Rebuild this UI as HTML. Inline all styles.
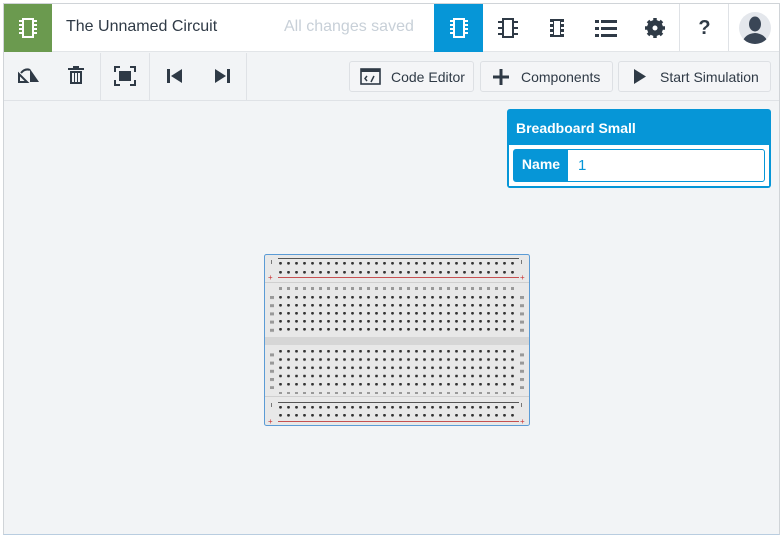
<!DOCTYPE html>
<html><head><style>
*{margin:0;padding:0;box-sizing:border-box}
body{width:783px;height:537px;background:#fff;font-family:"Liberation Sans",sans-serif;position:relative;overflow:hidden}
.frame{position:absolute;left:3px;top:3px;width:777px;height:532px;background:#f2f4f6;border-left:1px solid #d0d4d8;border-top:1px solid #d0d4d8;border-right:1px solid #d0d4d8;border-bottom:1px solid #b9cde0}
.hdr{position:absolute;left:4px;top:4px;width:775px;height:48px;background:#fff;border-bottom:1px solid #e2e5e8}
.green{position:absolute;left:0;top:0;width:48px;height:48px;background:#6b9a4f}
.title{position:absolute;left:62px;top:14px;font-size:16px;color:#2f3a46}
.saved{position:absolute;left:280px;top:14px;font-size:16px;color:#c8d0d8}
.tab{position:absolute;top:0;width:49px;height:48px;display:flex;align-items:center;justify-content:center}
.tb{position:absolute;left:4px;top:53px;width:775px;height:48px;border-bottom:1px solid #dfe2e6}
.sep{position:absolute;top:0;width:1px;height:47px;background:#dfe2e6}
.btn{position:absolute;top:8px;height:31px;border:1px solid #dde0e4;border-radius:3px;background:#f4f5f7;font-size:14px;color:#2f3a46;display:flex;align-items:center}
.panel{position:absolute;left:507px;top:109px;width:264px;height:79px;background:#0696d7;border-radius:3px}
.panel .h{position:absolute;left:9px;top:11px;color:#fff;font-weight:bold;font-size:14px}
.panel .in{position:absolute;left:2px;top:36px;width:260px;height:41px;background:#fff}
.name{position:absolute;left:4px;top:4px;width:252px;height:33px;border:1px solid #0696d7;border-radius:3px;background:#fff}
.name .l{position:absolute;left:0;top:0;width:54px;height:31px;background:#0696d7;color:#fff;font-weight:bold;font-size:14px;line-height:29px;text-align:center}
.name .v{position:absolute;left:64px;top:7px;color:#0696d7;font-size:15px}
</style></head><body>
<div class="frame"></div>
<div class="hdr">
 <div class="green"><svg width="48" height="48"><rect x="19" y="15" width="10" height="18" fill="none" stroke="#fff" stroke-width="2"/><g fill="#fff"><rect x="15" y="16" width="3" height="2"/><rect x="15" y="20" width="3" height="2"/><rect x="15" y="24" width="3" height="2"/><rect x="15" y="28" width="3" height="2"/><rect x="30" y="16" width="3" height="2"/><rect x="30" y="20" width="3" height="2"/><rect x="30" y="24" width="3" height="2"/><rect x="30" y="28" width="3" height="2"/></g></svg></div>
 <div class="title">The Unnamed Circuit</div>
 <div class="saved">All changes saved</div>
 <div class="tab" style="left:430px;background:#0696d7"><svg width="24" height="24"><rect x="7" y="3" width="10" height="18" fill="none" stroke="#fff" stroke-width="2"/><g fill="#fff"><rect x="3" y="4" width="3" height="2"/><rect x="3" y="8" width="3" height="2"/><rect x="3" y="12" width="3" height="2"/><rect x="3" y="16" width="3" height="2"/><rect x="18" y="4" width="3" height="2"/><rect x="18" y="8" width="3" height="2"/><rect x="18" y="12" width="3" height="2"/><rect x="18" y="16" width="3" height="2"/></g></svg></div>
 <div class="tab" style="left:479px"><svg width="24" height="24"><rect x="7" y="3" width="10" height="18" fill="none" stroke="#2f3a46" stroke-width="2"/><g fill="#2f3a46"><rect x="2" y="5" width="5" height="2"/><rect x="2" y="11" width="5" height="2"/><rect x="2" y="17" width="5" height="2"/><rect x="17" y="5" width="5" height="2"/><rect x="17" y="11" width="5" height="2"/><rect x="17" y="17" width="5" height="2"/></g></svg></div>
 <div class="tab" style="left:528px"><svg width="24" height="24"><rect x="5" y="3" width="14" height="18" fill="#2f3a46"/><g fill="#fff"><rect x="5" y="6" width="3" height="2"/><rect x="5" y="11" width="3" height="2"/><rect x="5" y="16" width="3" height="2"/><rect x="16" y="6" width="3" height="2"/><rect x="16" y="11" width="3" height="2"/><rect x="16" y="16" width="3" height="2"/><rect x="9" y="5" width="6" height="14"/></g></svg></div>
 <div class="tab" style="left:577px"><svg width="24" height="24" fill="#2f3a46"><rect x="1" y="4" width="4" height="3"/><rect x="7" y="4" width="16" height="3"/><rect x="1" y="11" width="4" height="3"/><rect x="7" y="11" width="16" height="3"/><rect x="1" y="18" width="4" height="3"/><rect x="7" y="18" width="16" height="3"/></svg></div>
 <div class="tab" style="left:626px"><svg width="24" height="24"><circle cx="12" cy="12" r="6.5" fill="none" stroke="#2f3a46" stroke-width="3"/><g stroke="#2f3a46" stroke-width="3.5"><line x1="12" y1="2" x2="12" y2="22"/><line x1="2" y1="12" x2="22" y2="12"/><line x1="5" y1="5" x2="19" y2="19"/><line x1="19" y1="5" x2="5" y2="19"/></g><circle cx="12" cy="12" r="5" fill="#2f3a46"/><circle cx="12" cy="12" r="2.5" fill="#fff"/></svg></div>
 <div class="sep" style="left:675px"></div>
 <div class="tab" style="left:676px;font-weight:bold;font-size:20px;color:#2f3a46">?</div>
 <div class="sep" style="left:724px"></div>
 <div class="tab" style="left:726px"><svg width="34" height="34"><circle cx="17" cy="17" r="16" fill="#e4e7ec"/><clipPath id="c"><circle cx="17" cy="17" r="16"/></clipPath><g clip-path="url(#c)" fill="#3a4656"><ellipse cx="17" cy="13" rx="6" ry="7.5"/><path d="M4 34 Q5 23 17 22 Q29 23 30 34Z"/></g></svg></div>
</div>
<div class="tb">
 <svg style="position:absolute;left:12px;top:12px" width="26" height="22"><path d="M3 17 L11 17 L3 9 Z" fill="none" stroke="#2f3a46" stroke-width="2"/><path d="M14 4 L23 17 L14 17Z" fill="#2f3a46"/><path d="M5 8 Q9 3 14 5" fill="none" stroke="#2f3a46" stroke-width="2"/></svg>
 <svg style="position:absolute;left:63px;top:12px" width="18" height="22" fill="#2f3a46"><rect x="1" y="3" width="16" height="2"/><rect x="6" y="1" width="6" height="2"/><path d="M3 6 h12 v13 h-12z M5 8 v9 h2 v-9z M8 8 v9 h2 v-9z M11 8 v9 h2 v-9z" fill-rule="evenodd"/></svg>
 <div class="sep" style="left:96px"></div>
 <svg style="position:absolute;left:110px;top:13px" width="22" height="20" fill="none" stroke="#2f3a46" stroke-width="2"><path d="M1 6V1H6M16 1H21V6M21 14V19H16M6 19H1V14"/><rect x="5" y="5" width="12" height="10" fill="#2f3a46" stroke="none"/></svg>
 <div class="sep" style="left:145px"></div>
 <svg style="position:absolute;left:162px;top:15px" width="18" height="16" fill="#2f3a46"><rect x="1" y="1" width="3" height="14"/><path d="M16 1V15L5 8Z"/></svg>
 <svg style="position:absolute;left:210px;top:15px" width="18" height="16" fill="#2f3a46"><rect x="13" y="1" width="3" height="14"/><path d="M1 1V15L12 8Z"/></svg>
 <div class="sep" style="left:242px"></div>
 <div class="btn" style="left:345px;width:125px"><svg style="margin:0 10px 0 10px" width="21" height="17"><rect x="1" y="1" width="19" height="15" fill="none" stroke="#2f3a46" stroke-width="1.6"/><rect x="1" y="1" width="19" height="3" fill="#2f3a46"/><path d="M7 8 L5 10.5 L7 13 M14 8 L11 14" fill="none" stroke="#2f3a46" stroke-width="1.5"/></svg>Code Editor</div>
 <div class="btn" style="left:476px;width:133px"><svg style="margin:0 12px 0 12px" width="16" height="16" fill="#2f3a46"><rect x="6.5" y="0" width="3" height="16"/><rect x="0" y="6.5" width="16" height="3"/></svg>Components</div>
 <div class="btn" style="left:614px;width:153px"><svg style="margin:0 14px 0 15px" width="12" height="15" fill="#2f3a46"><path d="M0 0V15L12 7.5Z"/></svg>Start Simulation</div>
</div>
<div class="panel"><div class="h">Breadboard Small</div><div class="in"><div class="name"><div class="l">Name</div><div class="v">1</div></div></div></div>
<svg style="position:absolute;left:264px;top:254px" width="266" height="172">
<defs>
<pattern id="a" x="15" y="8" width="8" height="9" patternUnits="userSpaceOnUse"><circle cx="1.5" cy="1.2" r="1.4" fill="#333"/></pattern>
<pattern id="b" x="15" y="42" width="8" height="8" patternUnits="userSpaceOnUse"><circle cx="1.5" cy="1.2" r="1.4" fill="#333"/></pattern>
<pattern id="c2" x="15" y="96" width="8" height="8.25" patternUnits="userSpaceOnUse"><circle cx="1.5" cy="1.2" r="1.4" fill="#333"/></pattern>
<pattern id="e" x="15" y="152" width="8" height="8" patternUnits="userSpaceOnUse"><circle cx="1.5" cy="1.2" r="1.4" fill="#333"/></pattern>
<pattern id="n" x="15" y="33" width="8" height="5" patternUnits="userSpaceOnUse"><rect x="0" y="0" width="3" height="3" fill="#999"/></pattern>
<pattern id="s" x="0" y="42" width="4" height="8.2" patternUnits="userSpaceOnUse"><rect x="0" y="0" width="4" height="3" fill="#999"/></pattern>
</defs>
<rect x="0.5" y="0.5" width="265" height="171" rx="2" fill="#e8e8e8" stroke="#5b9bd5"/>
<rect x="1" y="28" width="264" height="1" fill="#cfcfcf"/>
<rect x="1" y="83" width="264" height="8" fill="#d6d6d6"/>
<rect x="1" y="142" width="264" height="1" fill="#cfcfcf"/>
<line x1="14" y1="4.5" x2="255" y2="4.5" stroke="#555"/><line x1="14" y1="23.5" x2="255" y2="23.5" stroke="#c65050"/>
<line x1="14" y1="148.5" x2="255" y2="148.5" stroke="#555"/><line x1="14" y1="167.5" x2="255" y2="167.5" stroke="#c65050"/>
<rect x="14" y="7" width="240" height="14" fill="url(#a)"/>
<rect x="14" y="41" width="240" height="40" fill="url(#b)"/>
<rect x="14" y="95" width="240" height="40" fill="url(#c2)"/>
<rect x="14" y="151" width="240" height="14" fill="url(#e)"/>
<rect x="14" y="33" width="240" height="4" fill="url(#n)"/>
<rect x="14" y="136" width="240" height="4" fill="url(#n)" transform="translate(0,0)"/>
<g font-size="8" fill="#c33" font-family="Liberation Sans"><text x="4" y="26">+</text><text x="256" y="26">+</text><text x="4" y="170">+</text><text x="256" y="170">+</text></g>
<g fill="#777"><rect x="7" y="6" width="1" height="4"/><rect x="257" y="6" width="1" height="4"/><rect x="7" y="149" width="1" height="4"/><rect x="257" y="149" width="1" height="4"/></g>
<rect x="6" y="41" width="4" height="40" fill="url(#s)"/><rect x="256" y="41" width="4" height="40" fill="url(#s)"/>
<rect x="6" y="95" width="4" height="40" fill="url(#s)"/><rect x="256" y="95" width="4" height="40" fill="url(#s)"/>
</svg>
</body></html>
